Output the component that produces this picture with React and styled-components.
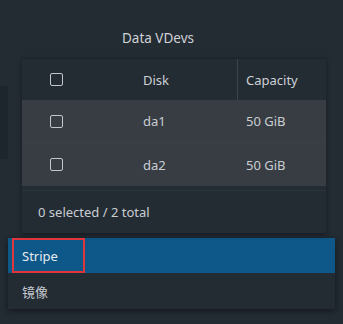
import React from 'react'
import styled, { createGlobalStyle } from 'styled-components'

const GlobalStyle = createGlobalStyle`
  html, body {
    margin: 0;
    padding: 0;
    background: #232b33;
  }
  body {
    font-family: "Noto Sans", "Open Sans", "Noto Sans CJK SC", sans-serif;
    color: #c9ced3;
  }
`

const disks = [
  { name: 'da1', size: '50 GiB' },
  { name: 'da2', size: '50 GiB' },
]

const options = ['Stripe', '镜像']

const App = () => {
  return (
    <>
      <GlobalStyle />
      <Page>
        <Title>Data VDevs</Title>
        <Body>
          <Side />
          <Card>
            <HeaderRow>
              <CheckCell>
                <Checkbox />
              </CheckCell>
              <DiskCell>Disk</DiskCell>
              <SizeCell $divider>Capacity</SizeCell>
            </HeaderRow>
            {disks.map((d) => (
              <DataRow key={d.name}>
                <CheckCell>
                  <Checkbox />
                </CheckCell>
                <DiskCell>{d.name}</DiskCell>
                <SizeCell>{d.size}</SizeCell>
              </DataRow>
            ))}
            <Footer>0 selected / 2 total</Footer>
          </Card>
        </Body>
        <Menu>
          {options.map((o, i) =>
            i === 0 ? (
              <Option key={o} $active>
                <Marked>{o}</Marked>
              </Option>
            ) : (
              <Option key={o}>{o}</Option>
            )
          )}
        </Menu>
      </Page>
    </>
  )
}

const Page = styled.div`
  width: 343px;
  height: 324px;
  padding-top: 27px;
  box-sizing: border-box;
  overflow: hidden;
`

const Title = styled.div`
  width: 316px;
  text-align: center;
  font-size: 13.5px;
  line-height: 22px;
  color: #cfd3d7;
`

const Body = styled.div`
  display: flex;
  margin-top: 9px;
`

const Side = styled.div`
  width: 8px;
  height: 73px;
  margin-top: 28px;
  margin-right: 14px;
  background: #1e262d;
`

const Card = styled.div`
  width: 304px;
  border-top: 1px solid #1c232a;
  box-shadow: 0 2px 5px rgba(0, 0, 0, 0.35);
`

const Row = styled.div`
  display: flex;
  align-items: center;
  font-size: 13px;
`

const HeaderRow = styled(Row)`
  height: 41px;
  background: #232b33;
  color: #cdd1d5;
`

const DataRow = styled(Row)`
  height: 42px;
  background: #373d43;
  & + & {
    height: 43px;
    border-top: 1px solid #3a4046;
  }
`

const CheckCell = styled.div`
  width: 113px;
  padding-left: 28px;
  box-sizing: border-box;
  display: flex;
  align-items: center;
`

const Checkbox = styled.span`
  display: block;
  width: 13px;
  height: 13px;
  border: 1.5px solid #c3c7cb;
  border-radius: 2px;
  box-sizing: border-box;
`

const DiskCell = styled.div`
  width: 102px;
  padding-left: 8px;
  box-sizing: border-box;
`

const SizeCell = styled.div`
  flex: 1;
  align-self: stretch;
  display: flex;
  align-items: center;
  padding-left: 8px;
  border-left: 1px solid ${(p) => (p.$divider ? '#3b434b' : 'transparent')};
`

const Footer = styled.div`
  height: 42px;
  margin-top: 4px;
  padding-left: 16px;
  display: flex;
  align-items: center;
  font-size: 13px;
  background: #232b33;
  border-top: 1px solid #2b333b;
`

const Menu = styled.div`
  width: 327px;
  margin: 5px 0 0 8px;
  background: #232b33;
  box-shadow: 0 2px 6px rgba(0, 0, 0, 0.45);
`

const Option = styled.div`
  height: ${(p) => (p.$active ? '35px' : '36px')};
  display: flex;
  align-items: center;
  padding-left: ${(p) => (p.$active ? '4px' : '14px')};
  font-size: 13px;
  background: ${(p) => (p.$active ? '#0d5789' : 'transparent')};
  color: ${(p) => (p.$active ? '#e6ebef' : '#c5cacf')};
`

const Marked = styled.span`
  display: flex;
  align-items: center;
  width: 73px;
  height: 35px;
  box-sizing: border-box;
  padding-left: 8px;
  border: 2px solid #e0353b;
`

export default App
